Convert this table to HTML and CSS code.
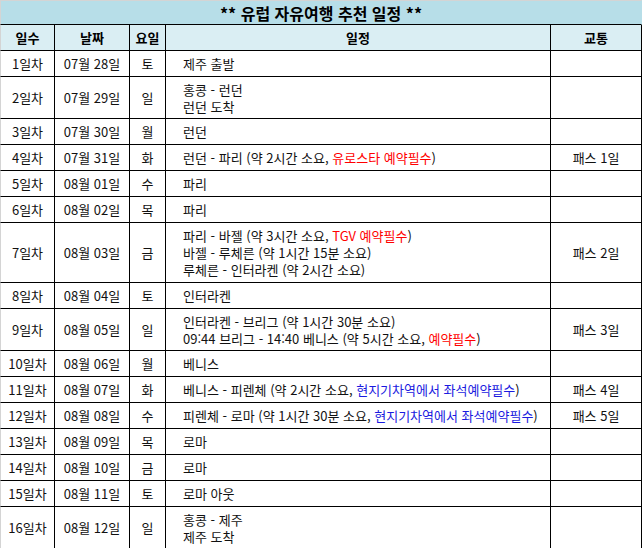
FILE: index.html
```html
<!DOCTYPE html>
<html lang="ko">
<head>
<meta charset="utf-8">
<title>유럽 자유여행 추천 일정</title>
<link rel="stylesheet" href="styles.css">
</head>
<body>
<table class="sheet">
  <colgroup>
    <col class="c-day"><col class="c-date"><col class="c-wd"><col class="c-plan"><col class="c-pass">
  </colgroup>
  <tr class="title-row"><td colspan="5" class="title">** 유럽 자유여행 추천 일정 **</td></tr>
  <tr class="head-row">
    <th class="first">일수</th><th>날짜</th><th>요일</th><th>일정</th><th>교통</th>
  </tr>
  <tr class="h1"><td class="first">1일차</td><td>07월 28일</td><td>토</td><td class="plan">제주 출발</td><td></td></tr>
  <tr class="h2"><td class="first">2일차</td><td>07월 29일</td><td>일</td><td class="plan">홍콩 - 런던<br>런던 도착</td><td></td></tr>
  <tr class="h1"><td class="first">3일차</td><td>07월 30일</td><td>월</td><td class="plan">런던</td><td></td></tr>
  <tr class="h1"><td class="first">4일차</td><td>07월 31일</td><td>화</td><td class="plan">런던 - 파리 (약 2시간 소요, <span class="red">유로스타 예약필수</span>)</td><td>패스 1일</td></tr>
  <tr class="h1"><td class="first">5일차</td><td>08월 01일</td><td>수</td><td class="plan">파리</td><td></td></tr>
  <tr class="h1"><td class="first">6일차</td><td>08월 02일</td><td>목</td><td class="plan">파리</td><td></td></tr>
  <tr class="h3"><td class="first">7일차</td><td>08월 03일</td><td>금</td><td class="plan">파리 - 바젤 (약 3시간 소요, <span class="red">TGV 예약필수</span>)<br>바젤 - 루체른 (약 1시간 15분 소요)<br>루체른 - 인터라켄 (약 2시간 소요)</td><td>패스 2일</td></tr>
  <tr class="h1"><td class="first">8일차</td><td>08월 04일</td><td>토</td><td class="plan">인터라켄</td><td></td></tr>
  <tr class="h2"><td class="first">9일차</td><td>08월 05일</td><td>일</td><td class="plan">인터라켄 - 브리그 (약 1시간 30분 소요)<br>09:44 브리그 - 14:40 베니스 (약 5시간 소요, <span class="red">예약필수</span>)</td><td>패스 3일</td></tr>
  <tr class="h1"><td class="first">10일차</td><td>08월 06일</td><td>월</td><td class="plan">베니스</td><td></td></tr>
  <tr class="h1"><td class="first">11일차</td><td>08월 07일</td><td>화</td><td class="plan">베니스 - 피렌체 (약 2시간 소요, <span class="blue">현지기차역에서 좌석예약필수</span>)</td><td>패스 4일</td></tr>
  <tr class="h1"><td class="first">12일차</td><td>08월 08일</td><td>수</td><td class="plan">피렌체 - 로마 (약 1시간 30분 소요, <span class="blue">현지기차역에서 좌석예약필수</span>)</td><td>패스 5일</td></tr>
  <tr class="h1"><td class="first">13일차</td><td>08월 09일</td><td>목</td><td class="plan">로마</td><td></td></tr>
  <tr class="h1"><td class="first">14일차</td><td>08월 10일</td><td>금</td><td class="plan">로마</td><td></td></tr>
  <tr class="h1"><td class="first">15일차</td><td>08월 11일</td><td>토</td><td class="plan">로마 아웃</td><td></td></tr>
  <tr class="h2"><td class="first">16일차</td><td>08월 12일</td><td>일</td><td class="plan">홍콩 - 제주<br>제주 도착</td><td></td></tr>
</table>
</body>
</html>
```

FILE: styles.css
```css
html, body {
  margin: 0;
  padding: 0;
  background: #ffffff;
}

.sheet {
  border-collapse: separate;
  border-spacing: 0;
  table-layout: fixed;
  width: 642px;
  font-family: "Noto Sans CJK KR", "Noto Sans", sans-serif;
  font-size: 13px;
  line-height: 17px;
  color: #111111;
}

.c-day { width: 55px; }
.c-date { width: 75px; }
.c-wd { width: 36px; }
.c-plan { width: 385px; }
.c-pass { width: 91px; }

.sheet td, .sheet th {
  box-sizing: border-box;
  padding: 0;
  border-right: 1px solid #000000;
  border-bottom: 1px solid #000000;
  text-align: center;
  vertical-align: middle;
  white-space: nowrap;
  overflow: hidden;
}

.sheet .first {
  border-left: 1px solid #d4d4d4;
}

.sheet .title {
  height: 25px;
  background: #b7dee8;
  border-top: 1px solid #d4d4d4;
  border-left: 1px solid #d4d4d4;
  border-right: 1px solid #b7dee8;
  font-size: 16px;
  line-height: 20px;
  font-weight: bold;
  color: #000000;
}

.head-row th {
  height: 26px;
  background: #daeef3;
  font-weight: bold;
  color: #000000;
}

.h1 td { height: 26px; }
.h2 td { height: 42px; }
.h3 td { height: 60px; }

.sheet .plan {
  text-align: left;
  padding-left: 17px;
}

.red { color: #ff0000; }
.blue { color: #1a1ae0; }
```
